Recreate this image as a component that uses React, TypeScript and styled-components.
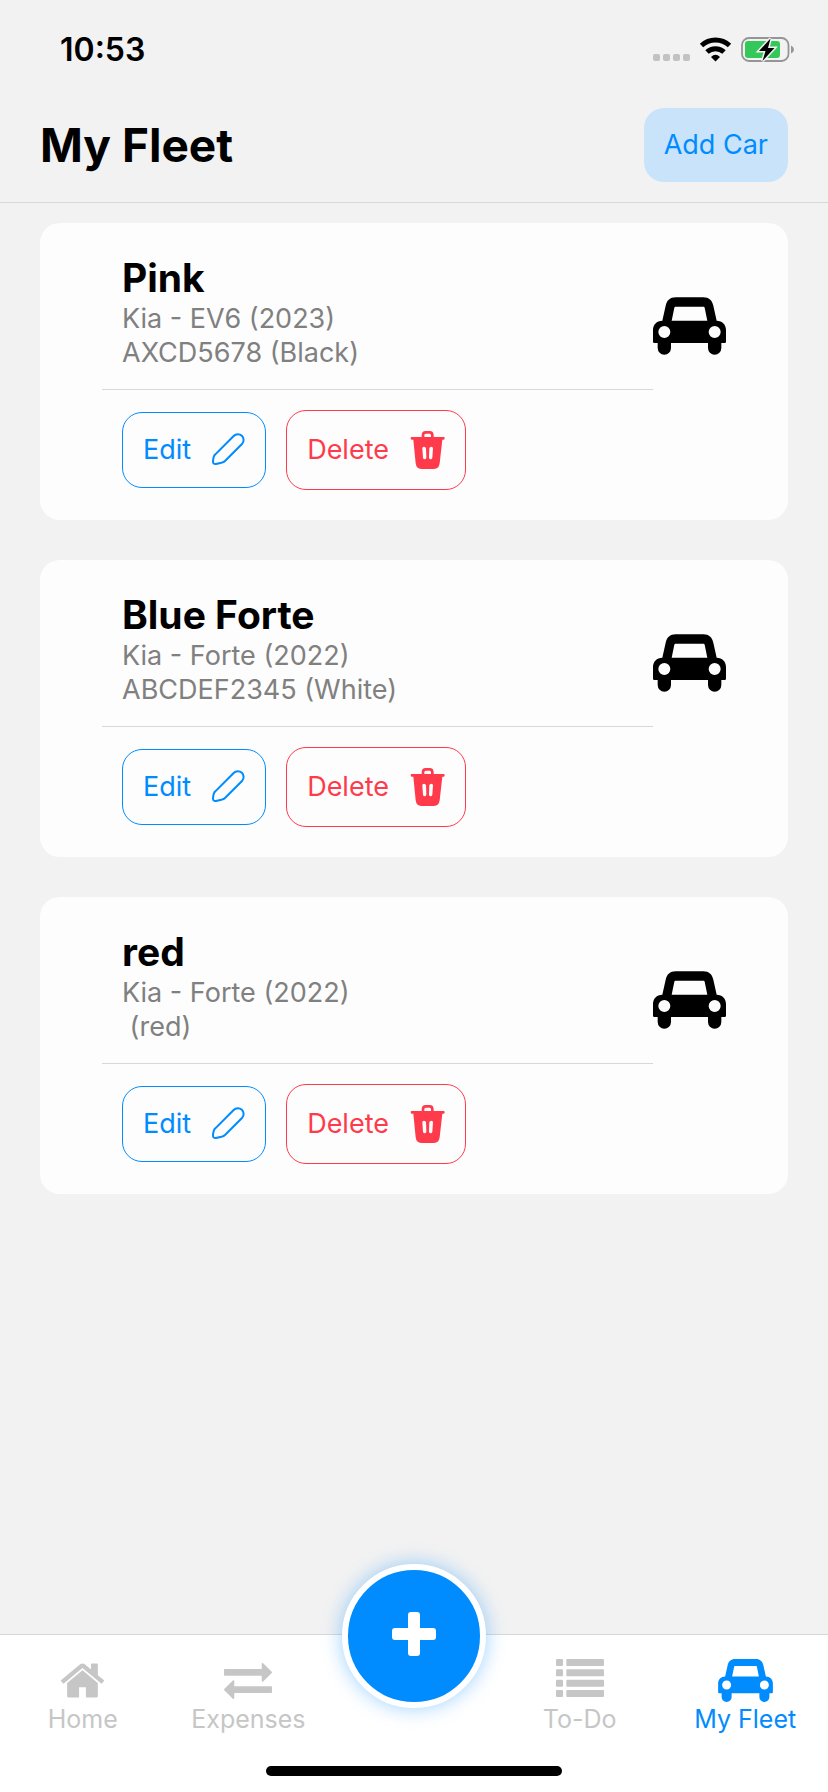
import React from "react";
import styled, { createGlobalStyle } from "styled-components";

const color = {
  page: "#f2f2f2",
  card: "#fdfdfd",
  line: "#d8d8d8",
  blue: "#008cff",
  red: "#ff3b4b",
  gray: "#808080",
  idle: "#c6c6c6",
};

const GlobalStyle = createGlobalStyle`
  *, *::before, *::after { box-sizing: border-box; }
  body { margin: 0; background: ${color.page}; }
  body, button { font-family: Inter, "Liberation Sans", sans-serif; }
  h1, h2, p, ul { margin: 0; padding: 0; }
  svg { display: block; flex: none; }
`;

const Screen = styled.div`
  min-height: 100vh;
  display: flex;
  flex-direction: column;
`;

const StatusBar = styled.div`
  display: flex;
  justify-content: space-between;
  align-items: center;
  height: 88px;
  padding: 12px 34px 0 60px;
`;

const Clock = styled.time`
  font-size: 32px;
  line-height: 40px;
  font-weight: 600;
`;

const StatusIcons = styled.div`
  display: flex;
  align-items: center;
`;

const Header = styled.header`
  display: flex;
  justify-content: space-between;
  align-items: center;
  padding: 20px 40px;
  border-bottom: 1px solid ${color.line};
`;

const Title = styled.h1`
  font-size: 46px;
  line-height: 56px;
  font-weight: 700;
`;

const AddButton = styled.button`
  min-height: 74px;
  padding: 0 20px;
  border: 0;
  border-radius: 20px;
  background: #c9e4fa;
  color: ${color.blue};
  font-size: 27px;
  line-height: 34px;
`;

const FleetList = styled.ul`
  flex: 1;
  display: flex;
  flex-direction: column;
  gap: 40px;
  padding: 20px 40px 40px;
  list-style: none;
`;

const Card = styled.li`
  display: flex;
  align-items: flex-start;
  padding: 32px 62px 30px;
  border-radius: 20px;
  background: ${color.card};
`;

const CardMain = styled.div`
  flex: 1;
`;

const CarInfo = styled.div`
  padding: 0 20px 19px;
  border-bottom: 1px solid ${color.line};
`;

const CarName = styled.h2`
  padding-bottom: 1px;
  font-size: 39px;
  line-height: 46px;
  font-weight: 700;
`;

const CarLine = styled.p`
  color: ${color.gray};
  font-size: 27px;
  line-height: 34px;
  white-space: pre;
`;

const CardActions = styled.div`
  display: flex;
  align-items: center;
  gap: 20px;
  padding: 20px 20px 0;
`;

const ActionButton = styled.button<{ $tone: string; $height: number }>`
  display: flex;
  align-items: center;
  gap: 20px;
  min-height: ${(p) => p.$height}px;
  padding: 0 20px;
  border: 1px solid ${(p) => p.$tone};
  border-radius: 20px;
  background: transparent;
  color: ${(p) => p.$tone};
  font-size: 27px;
  line-height: 34px;
`;

const CardIcon = styled.div`
  padding-top: 42px;
`;

const TabBar = styled.nav`
  position: sticky;
  bottom: 0;
  border-top: 1px solid ${color.line};
  background: #fff;
`;

const Tabs = styled.div`
  display: grid;
  grid-template-columns: repeat(5, 1fr);
  height: 131px;
`;

const Tab = styled.a<{ $active?: boolean }>`
  display: flex;
  flex-direction: column;
  align-items: center;
  padding-top: 22px;
  color: ${(p) => (p.$active ? color.blue : color.idle)};
  font-size: 25px;
  line-height: 32px;
  text-decoration: none;
`;

const TabIcon = styled.span`
  display: flex;
  align-items: center;
  height: 46px;
`;

const AddTab = styled.button`
  position: absolute;
  top: -71px;
  left: 50%;
  display: flex;
  align-items: center;
  justify-content: center;
  width: 144px;
  height: 144px;
  margin-left: -72px;
  padding: 0 0 4px;
  border: 6px solid #fff;
  border-radius: 50%;
  background: ${color.blue};
  box-shadow: 0 0 20px rgba(0, 140, 255, 0.4);
`;

const HomeIndicator = styled.div`
  width: 296px;
  height: 10px;
  margin: 0 auto 16px;
  border-radius: 5px;
  background: #000;
`;

const CarIcon = ({ width, height }: { width: number; height: number }) => (
  <svg width={width} height={height} viewBox="0 0 219 172" fill="currentColor" aria-hidden="true">
    <path
      fillRule="evenodd"
      d="M28 70L38 25C42 9 51 0 68 0H151C168 0 177 9 181 25L191 70C208 70 219 82 219 98V133Q219 137 215 137H205V152A20 20 0 0 1 165 152V137H54V152A20 20 0 0 1 14 152V137H4Q0 137 0 133V98C0 82 11 70 28 70ZM67 28Q65 28 64 31L56 70H163L155 31Q154 28 152 28ZM34 86A18 18 0 1 0 34 122A18 18 0 1 0 34 86ZM185 86A18 18 0 1 0 185 122A18 18 0 1 0 185 86Z"
    />
  </svg>
);

const PencilIcon = () => (
  <svg width="34" height="36" viewBox="3 2 102 108" fill="none" stroke="currentColor" strokeWidth="6" strokeLinejoin="round" aria-hidden="true">
    <path d="M71 14A17 17 0 0 1 96 38L45 89Q40 94 18 98Q9 99 9 91Q10 73 16 69Z" />
  </svg>
);

const TrashIcon = () => (
  <svg width="36" height="38" viewBox="-5 0 108 114" fill="currentColor" aria-hidden="true">
    <path
      fillRule="evenodd"
      d="M3 18H33V13Q33 0 45 0H57Q69 0 69 13V18H99Q102 18 102 22T99 26H95L87 97Q85 114 70 114H32Q17 114 15 97L8 26H3Q0 26 0 22T3 18ZM41 18H61V13Q61 8 57 8H45Q41 8 41 13ZM35 52L37 80Q38 85 42 85T47 80L46 52Q45 47 40 47T35 52ZM56 52L55 80Q56 85 60 85T65 80L67 52Q67 47 62 47T56 52Z"
    />
  </svg>
);

const HomeIcon = () => (
  <svg width="43" height="35" viewBox="26 253 1613 1284" fill="currentColor" aria-hidden="true">
    <path d="M1408 992v480q0 26-19 45t-45 19h-384v-384h-256v384h-384q-26 0-45-19t-19-45v-480q0-1 .5-3t.5-3l575-474 575 474q1 2 1 6zm223-69l-62 74q-8 9-21 11h-3q-13 0-21-7l-692-577-692 577q-12 8-24 7-13-2-21-11l-62-74q-8-10-7-23.5t11-21.5l719-599q32-26 76-26t76 26l244 204v-195q0-14 9-23t23-9h192q14 0 23 9t9 23v408l219 182q10 8 11 21.5t-7 23.5z" />
  </svg>
);

const ExchangeIcon = () => (
  <svg width="48" height="38" viewBox="0 213 1792 1419" fill="currentColor" aria-hidden="true">
    <path d="M1792 1184v192q0 13-9.5 22.5t-22.5 9.5h-1376v192q0 13-9.5 22.5t-22.5 9.5q-12 0-24-10l-319-320q-9-9-9-22 0-14 9-23l320-320q9-9 23-9 13 0 22.5 9.5t9.5 22.5v192h1376q13 0 22.5 9.5t9.5 22.5zm0-544q0 14-9 23l-320 320q-9 9-23 9-13 0-22.5-9.5t-9.5-22.5v-192h-1376q-13 0-22.5-9.5t-9.5-22.5v-192q0-13 9.5-22.5t22.5-9.5h1376v-192q0-14 9-23t23-9q12 0 24 10l319 319q9 9 9 23z" />
  </svg>
);

const ListIcon = () => (
  <svg width="48" height="42" viewBox="0 0 144 126" fill="currentColor" aria-hidden="true">
    {[0, 31, 62, 93].map((y) => (
      <React.Fragment key={y}>
        <rect x="0" y={y} width="21" height="21" rx="3" />
        <rect x="31" y={y} width="113" height="21" rx="3" />
      </React.Fragment>
    ))}
  </svg>
);

const PlusIcon = () => (
  <svg width="44" height="44" viewBox="0 0 44 44" fill="#fff" aria-hidden="true">
    <rect x="16" y="0" width="12" height="44" rx="3" />
    <rect x="0" y="16" width="44" height="12" rx="3" />
  </svg>
);

const StatusGlyphs = () => (
  <svg width="142" height="26" viewBox="0 0 142 26" aria-hidden="true">
    {[1, 11, 21, 31].map((x) => (
      <rect key={x} x={x} y="17" width="7" height="7" rx="2" fill="#c2c2c2" />
    ))}
    <g fill="none" stroke="#000" strokeWidth="5">
      <path d="M49.5 8.5A20.5 20.5 0 0 1 77.5 8.5" />
      <path d="M55 15A12.5 12.5 0 0 1 72 15" />
    </g>
    <path d="M63.5 24.5L59 20Q63.5 15.5 68 20Z" />
    <rect x="90" y="1" width="46.5" height="23" rx="7" fill="none" stroke="#959595" strokeWidth="1.8" />
    <rect x="93" y="4" width="35" height="17" rx="3" fill="#34c759" />
    <path d="M139 8.5Q142 10 142 12.5T139 16.5Z" fill="#959595" />
    <path d="M118.500 1.500L107 14H113.500L110.500 24L122.500 11H116Z" fill="#000" stroke="#f2f2f2" strokeWidth="3" paintOrder="stroke" />
  </svg>
);

const cars = [
  { name: "Pink", model: "Kia - EV6 (2023)", plate: "AXCD5678 (Black)" },
  { name: "Blue Forte", model: "Kia - Forte (2022)", plate: "ABCDEF2345 (White)" },
  { name: "red", model: "Kia - Forte (2022)", plate: " (red)" },
];

export default function App() {
  return (
    <Screen>
      <GlobalStyle />
      <StatusBar>
        <Clock>10:53</Clock>
        <StatusIcons>
          <StatusGlyphs />
        </StatusIcons>
      </StatusBar>
      <Header>
        <Title>My Fleet</Title>
        <AddButton type="button">Add Car</AddButton>
      </Header>
      <FleetList>
        {cars.map((car) => (
          <Card key={car.name}>
            <CardMain>
              <CarInfo>
                <CarName>{car.name}</CarName>
                <CarLine>{car.model}</CarLine>
                <CarLine>{car.plate}</CarLine>
              </CarInfo>
              <CardActions>
                <ActionButton type="button" $tone={color.blue} $height={76}>
                  Edit
                  <PencilIcon />
                </ActionButton>
                <ActionButton type="button" $tone={color.red} $height={80}>
                  Delete
                  <TrashIcon />
                </ActionButton>
              </CardActions>
            </CardMain>
            <CardIcon>
              <CarIcon width={73} height={58} />
            </CardIcon>
          </Card>
        ))}
      </FleetList>
      <TabBar>
        <Tabs>
          <Tab href="#home">
            <TabIcon><HomeIcon /></TabIcon>
            Home
          </Tab>
          <Tab href="#expenses">
            <TabIcon><ExchangeIcon /></TabIcon>
            Expenses
          </Tab>
          <span />
          <Tab href="#todo">
            <TabIcon><ListIcon /></TabIcon>
            To-Do
          </Tab>
          <Tab href="#fleet" $active aria-current="page">
            <TabIcon><CarIcon width={55} height={43} /></TabIcon>
            My Fleet
          </Tab>
        </Tabs>
        <AddTab type="button" aria-label="Add">
          <PlusIcon />
        </AddTab>
        <HomeIndicator />
      </TabBar>
    </Screen>
  );
}
